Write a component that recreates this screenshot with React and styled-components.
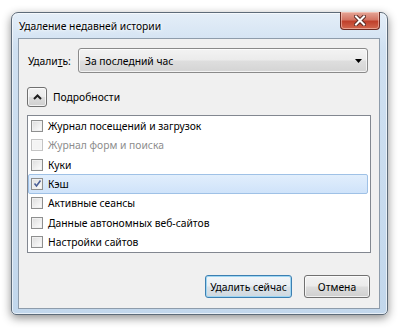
import React from 'react';
import styled, { createGlobalStyle } from 'styled-components';

const Global = createGlobalStyle`
  html, body { margin: 0; padding: 0; background: #ffffff; }
  body { font-family: "Noto Sans", "Open Sans", sans-serif; font-size: 10.3px; color: #000; }
`;

const Page = styled.div`
  width: 400px;
  height: 329px;
  padding: 12px 0 0 11px;
  box-sizing: border-box;
`;

const Window = styled.div`
  width: 377px;
  height: 303px;
  box-sizing: border-box;
  border: 1px solid #5d6b79;
  border-radius: 7px 7px 5px 5px;
  background: linear-gradient(180deg, #e4eef8 0%, #cfe0f1 12%, #c2d7ec 100%);
  box-shadow: 0 3px 10px rgba(0, 0, 0, 0.45), inset 0 0 0 1px rgba(255, 255, 255, 0.6);
  padding: 0 7px 5px 6px;
  display: flex;
  flex-direction: column;
`;

const TitleBar = styled.div`
  height: 25px;
  display: flex;
  justify-content: space-between;
  align-items: flex-start;
`;

const Title = styled.div`
  padding: 6px 0 0 1px;
  font-size: 10.3px;
  color: #000;
  text-shadow: 0 0 6px #fff, 0 0 3px #fff;
`;

const CloseButton = styled.div`
  width: 40px;
  height: 18px;
  margin-top: -1px;
  box-sizing: border-box;
  border: 1px solid #6c2a22;
  border-top: none;
  border-radius: 0 0 4px 4px;
  background: linear-gradient(180deg, #e5a697 0%, #d47564 45%, #c0402b 55%, #d2684f 100%);
  box-shadow: inset 0 0 0 1px rgba(255, 220, 210, 0.5);
  display: flex;
  align-items: center;
  justify-content: center;
`;

const Client = styled.div`
  flex: 1;
  background: #f0f0f0;
  border: 1px solid #8e9cab;
  padding: 9px 8px 0 8px;
  display: flex;
  flex-direction: column;
`;

const FieldRow = styled.div`
  display: flex;
  align-items: center;
  padding: 0 1px 0 1px;
  margin-right: 2px;
`;

const Label = styled.span`
  width: 50px;
  white-space: nowrap;
  u { text-decoration: underline; }
`;

const Select = styled.div`
  flex: 1;
  height: 25px;
  box-sizing: border-box;
  border: 1px solid #8a8a8a;
  border-radius: 3px;
  background: linear-gradient(180deg, #f3f3f3 0%, #ebebeb 48%, #dedede 52%, #d4d4d4 100%);
  box-shadow: inset 0 0 0 1px rgba(255, 255, 255, 0.7);
  display: flex;
  align-items: center;
  justify-content: space-between;
  padding: 0 5px 0 6px;
`;

const Toggle = styled.div`
  display: flex;
  align-items: center;
  gap: 6px;
  margin-top: 14px;
`;

const ToggleButton = styled.div`
  width: 20px;
  height: 20px;
  box-sizing: border-box;
  border: 1px solid #707070;
  border-radius: 3px;
  background: linear-gradient(180deg, #f2f2f2 0%, #ebebeb 48%, #dddddd 52%, #cfcfcf 100%);
  box-shadow: inset 0 0 0 1px rgba(255, 255, 255, 0.7);
  display: flex;
  align-items: center;
  justify-content: center;
`;

const List = styled.div`
  margin-top: 8px;
  height: 138px;
  box-sizing: border-box;
  border: 1px solid #828790;
  background: #fff;
  display: flex;
  flex-direction: column;
`;

const Row = styled.div`
  height: 19.6px;
  box-sizing: border-box;
  display: flex;
  align-items: center;
  gap: 5px;
  padding-left: 2px;
  margin-right: 2px;
  white-space: nowrap;
  color: ${p => (p.disabled ? '#8d8d8d' : '#000')};
  border: 1px solid ${p => (p.selected ? '#9fc1e6' : 'transparent')};
  border-radius: 2px;
  background: ${p => (p.selected ? 'linear-gradient(180deg, #e1eefc 0%, #cfe3fa 100%)' : 'transparent')};
`;

const Box = styled.span`
  width: 12px;
  height: 12px;
  box-sizing: border-box;
  border: 1px solid ${p => (p.disabled ? '#c4c4c4' : '#8e8f8f')};
  background: ${p => (p.disabled ? '#f4f4f4' : 'linear-gradient(135deg, #dcdcdc 0%, #f4f4f4 70%, #ffffff 100%)')};
  box-shadow: inset 0 0 0 1px ${p => (p.disabled ? '#f7f7f7' : '#f0f0f0')};
  display: flex;
  align-items: center;
  justify-content: center;
`;

const Footer = styled.div`
  flex: 1;
  display: flex;
  justify-content: flex-end;
  align-items: flex-start;
  gap: 12px;
  padding: 22px 1px 0 0;
`;

const Button = styled.div`
  width: ${p => p.w}px;
  height: 23px;
  box-sizing: border-box;
  white-space: nowrap;
  border: 1px solid ${p => (p.primary ? '#3c7fb1' : '#707070')};
  border-radius: 3px;
  background: ${p => (p.primary
    ? 'linear-gradient(180deg, #f2f6f9 0%, #e9eef2 48%, #dae2e8 52%, #cfd8df 100%)'
    : 'linear-gradient(180deg, #f2f2f2 0%, #ebebeb 48%, #dddddd 52%, #cfcfcf 100%)')};
  box-shadow: inset 0 0 0 1px ${p => (p.primary ? '#9fd6f3' : 'rgba(255,255,255,0.7)')};
  display: flex;
  align-items: center;
  justify-content: center;
`;

const items = [
  { label: 'Журнал посещений и загрузок' },
  { label: 'Журнал форм и поиска', disabled: true },
  { label: 'Куки' },
  { label: 'Кэш', checked: true, selected: true },
  { label: 'Активные сеансы' },
  { label: 'Данные автономных веб-сайтов' },
  { label: 'Настройки сайтов' },
];

export default function App() {
  return (
    <Page>
      <Global />
      <Window>
        <TitleBar>
          <Title>Удаление недавней истории</Title>
          <CloseButton>
            <svg width="12" height="11" viewBox="0 0 12 11">
              <path d="M2 1.5 L10 9.5 M10 1.5 L2 9.5" stroke="#5a2a24" strokeWidth="4" strokeLinecap="square" />
              <path d="M2 1.5 L10 9.5 M10 1.5 L2 9.5" stroke="#ffffff" strokeWidth="2" strokeLinecap="square" />
            </svg>
          </CloseButton>
        </TitleBar>
        <Client>
          <FieldRow>
            <Label>Удали<u>т</u>ь:</Label>
            <Select>
              <span>За последний час</span>
              <svg width="7" height="4" viewBox="0 0 7 4"><path d="M0 0 H7 L3.5 4 Z" fill="#000" /></svg>
            </Select>
          </FieldRow>
          <Toggle>
            <ToggleButton>
              <svg width="9" height="6" viewBox="0 0 9 6">
                <path d="M1 5 L4.5 1.5 L8 5" stroke="#1e1e1e" strokeWidth="2" fill="none" />
              </svg>
            </ToggleButton>
            <span>Подробности</span>
          </Toggle>
          <List>
            {items.map(it => (
              <Row key={it.label} disabled={it.disabled} selected={it.selected}>
                <Box disabled={it.disabled}>
                  {it.checked && (
                    <svg width="9" height="9" viewBox="0 0 9 9">
                      <path d="M1.5 4.5 L3.5 7 L7.5 1.5" stroke="#4a5f97" strokeWidth="1.6" fill="none" />
                    </svg>
                  )}
                </Box>
                <span>{it.label}</span>
              </Row>
            ))}
          </List>
          <Footer>
            <Button primary w={87}>Удалить сейчас</Button>
            <Button w={66}>Отмена</Button>
          </Footer>
        </Client>
      </Window>
    </Page>
  );
}
